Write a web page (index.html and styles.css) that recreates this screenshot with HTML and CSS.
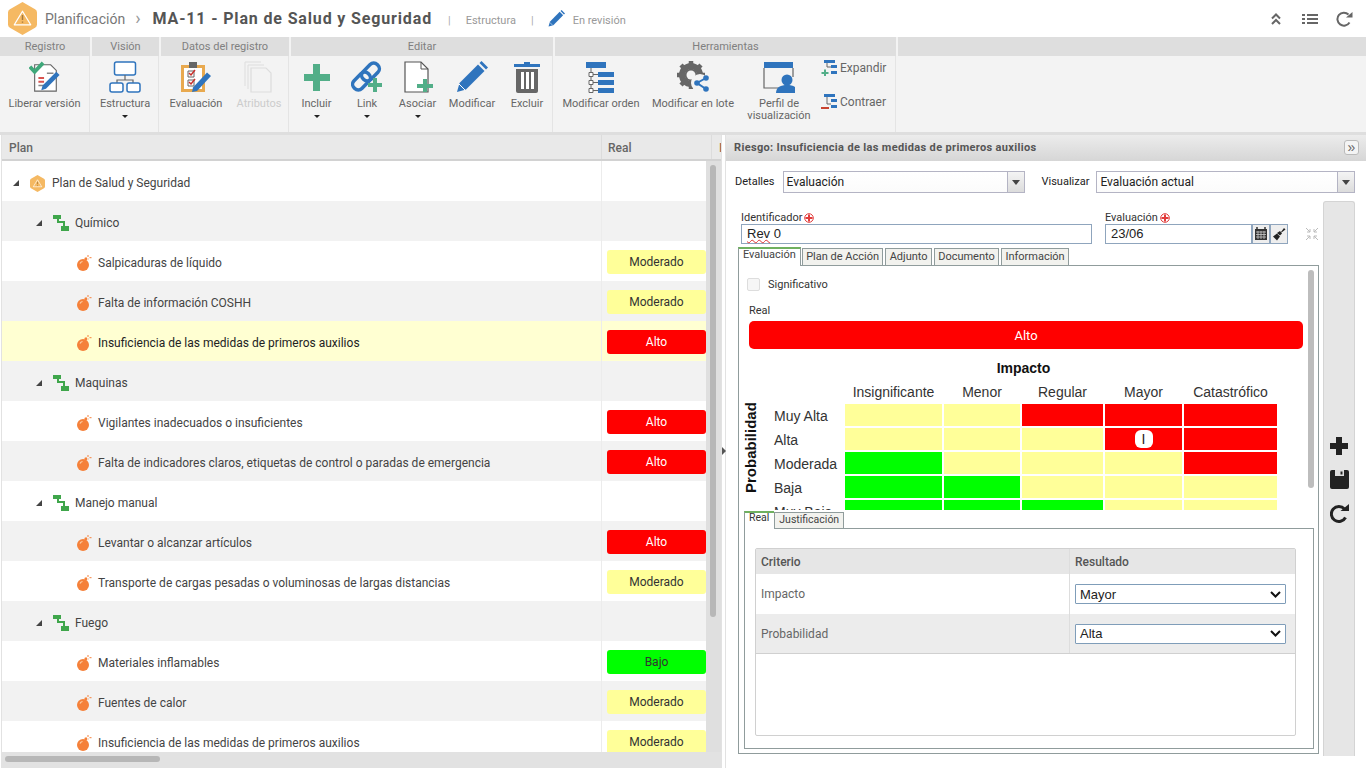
FILE: index.html
```html
<!DOCTYPE html>
<html lang="es">
<head>
    <meta charset="UTF-8">
    <title>MA-11 - Plan de Salud y Seguridad</title>
    <link rel="stylesheet" href="styles.css">
</head>
<body>
    <svg class="defs" width="0" height="0">
        <symbol id="bomb" viewBox="0 0 16 16">
            <circle cx="7" cy="10" r="6" fill="#f5813a"/>
            <path d="M4 8.5a3.5 3.5 0 0 1 2.5-2" stroke="#fcd0a8" stroke-width="1.2" fill="none"/>
            <rect x="8.5" y="2.8" width="2.5" height="2.5" fill="#f5813a"/>
            <path d="M12 0v2M12 3.5v1M13.5 2.7h2M9.5 2.7h1" stroke="#f5813a" stroke-width="1"/>
        </symbol>
        <symbol id="branch" viewBox="0 0 16 16">
            <path d="M0 0h8v4H6v2h6v5h4v5H8v-5h2V8H4V4H0z" fill="#3fa64b"/>
        </symbol>
        <symbol id="hex" viewBox="0 0 30 34">
            <path d="M15 0l13 7.5a4 4 0 0 1 2 3.5v12a4 4 0 0 1-2 3.5L15 34 2 26.5a4 4 0 0 1-2-3.5V11a4 4 0 0 1 2-3.5z" fill="#f5b963"/>
            <path d="M15 9.5L23.5 23.5H6.5z" fill="none" stroke="#fff" stroke-width="1.3" stroke-linejoin="round"/>
            <path d="M15 13.5v5M15 20v1.5" stroke="#a5793c" stroke-width="1.5"/>
        </symbol>
        <symbol id="caret" viewBox="0 0 8 8">
            <path d="M7 1v6H1z" fill="#444"/>
        </symbol>
        <symbol id="mandatory" viewBox="0 0 10 10">
            <circle cx="5" cy="5" r="4.3" fill="none" stroke="#e23b3b"/>
            <path d="M5 1.5v7M1.5 5h7" stroke="#e23b3b" stroke-width="2"/>
        </symbol>
        <symbol id="pencil" viewBox="0 0 32 32">
            <path d="M1 31l2.5-9L22 3.5l6.5 6.5L10 28.5z" fill="#2f74bd"/>
            <path d="M23.5 2l2-2 6.5 6.5-2 2z" fill="#2f74bd"/>
            <path d="M3 23l6 6" stroke="#fff" stroke-width="1"/>
        </symbol>
    </svg>

    <header class="topbar">
        <svg class="logo"><use href="#hex"/></svg>
        <span class="crumb">Planificación</span>
        <span class="crumb-arrow">›</span>
        <h1 class="title">MA-11 - Plan de Salud y Seguridad</h1>
        <span class="pipe pipe-first">|</span>
        <span class="meta">Estructura</span>
        <span class="pipe pipe-last">|</span>
        <svg class="status-pen"><use href="#pencil"/></svg>
        <span class="meta">En revisión</span>
        <div class="top-actions">
            <svg class="chev" width="10" height="12" viewBox="0 0 10 12"><path d="M1 5.5l4-4 4 4M1 11l4-4 4 4" fill="none" stroke="#666" stroke-width="2"/></svg>
            <svg width="16" height="12" viewBox="0 0 16 12"><path d="M0 2h3M5 2h11M0 6h3M5 6h11M0 10h3M5 10h11" stroke="#666" stroke-width="2"/></svg>
            <svg width="18" height="16" viewBox="0 0 18 16"><path d="M14.5 11.5A6.5 6.5 0 1 1 13.5 3.5" fill="none" stroke="#666" stroke-width="2"/><path d="M11 6.5h6.5V1z" fill="#666"/></svg>
        </div>
    </header>

    <nav class="ribbon">
        <section class="group g-reg">
            <h2>Registro</h2>
            <div class="tools">
                <div class="tool">
                    <svg class="ico" viewBox="0 0 34 32">
                        <path d="M6 3h17l6 6v22H6z" fill="#fff" stroke="#666" stroke-width="1.2"/>
                        <path d="M10 17h6M10 21h6" stroke="#d9534f" stroke-width="2"/>
                        <path d="M10 25h7M19 12h7" stroke="#888" stroke-width="1.5"/>
                        <path d="M13 30l1.5-5L29 10.5l3.5 3.5L18 28.5z" fill="#2f74bd"/>
                        <path d="M1 5l5 5.5L15 1" fill="none" stroke="#3fa87a" stroke-width="4"/>
                    </svg>
                    <span>Liberar versión</span>
                </div>
            </div>
        </section>
        <section class="group g-vis">
            <h2>Visión</h2>
            <div class="tools">
                <div class="tool">
                    <svg class="ico" viewBox="0 0 32 32">
                        <rect x="5.5" y="1" width="21" height="13" rx="2" fill="#fff" stroke="#2f74bd" stroke-width="1.5"/>
                        <path d="M16 14v5M8 23v-4h16v4" fill="none" stroke="#666" stroke-width="1.2"/>
                        <rect x="1" y="22" width="13" height="9" rx="2" fill="#fff" stroke="#2f74bd" stroke-width="1.5"/>
                        <rect x="18" y="22" width="13" height="9" rx="2" fill="#fff" stroke="#2f74bd" stroke-width="1.5"/>
                    </svg>
                    <span>Estructura</span>
                    <i class="drop"></i>
                </div>
            </div>
        </section>
        <section class="group g-data">
            <h2>Datos del registro</h2>
            <div class="tools">
                <div class="tool">
                    <svg class="ico" viewBox="0 0 32 32">
                        <rect x="1" y="4" width="24" height="27" fill="#e8a94f"/>
                        <rect x="4" y="7" width="18" height="21" fill="#fff"/>
                        <rect x="9" y="1" width="8" height="6" fill="#666"/>
                        <path d="M8 10h6v6H8zM8 19h6v6H8z" fill="#fff" stroke="#666"/>
                        <path d="M9 12l2 2 4-5M9 21l2 2 4-5" fill="none" stroke="#c9302c" stroke-width="1.5"/>
                        <path d="M12 31l1-4.5L27 11.5l4 3.5L17 30z" fill="#2f74bd"/>
                    </svg>
                    <span>Evaluación</span>
                </div>
                <div class="tool disabled">
                    <svg class="ico" viewBox="0 0 32 32">
                        <path d="M2 1h16M2 1v24M5 4h16M5 4v24" fill="none" stroke="#ddd"/>
                        <path d="M8 7h15l5 5v19H8z" fill="none" stroke="#ddd" stroke-width="1.2"/>
                    </svg>
                    <span>Atributos</span>
                </div>
            </div>
        </section>
        <section class="group g-edit">
            <h2>Editar</h2>
            <div class="tools">
                <div class="tool">
                    <svg class="ico" viewBox="0 0 32 32"><path d="M12 3h7v10h10v7H19v10h-7V20H3v-7h9z" fill="#52ae88"/></svg>
                    <span>Incluir</span>
                    <i class="drop"></i>
                </div>
                <div class="tool">
                    <svg class="ico" viewBox="0 0 32 32">
                        <rect x="14" y="1" width="11" height="20" rx="5" transform="rotate(45 19.5 11)" fill="none" stroke="#2f74bd" stroke-width="3.5"/>
                        <rect x="5" y="10" width="11" height="20" rx="5" transform="rotate(45 10.5 20)" fill="none" stroke="#2f74bd" stroke-width="3.5"/>
                        <path d="M22 17h4v5h5v4h-5v5h-4v-5h-5v-4h5z" fill="#52ae88"/>
                    </svg>
                    <span>Link</span>
                    <i class="drop"></i>
                </div>
                <div class="tool">
                    <svg class="ico" viewBox="0 0 32 32">
                        <path d="M3 1h16l7 7v23H3z" fill="#fff" stroke="#555" stroke-width="1.2"/>
                        <path d="M19 1v7h7" fill="none" stroke="#555"/>
                        <path d="M21 18h4v5h6v4h-6v4h-4v-4h-6v-4h6z" fill="#52ae88"/>
                    </svg>
                    <span>Asociar</span>
                    <i class="drop"></i>
                </div>
                <div class="tool">
                    <svg class="ico"><use href="#pencil"/></svg>
                    <span>Modificar</span>
                </div>
                <div class="tool">
                    <svg class="ico" viewBox="0 0 32 32">
                        <path d="M3 3h26v3H3z" fill="#2f74bd"/>
                        <path d="M13 1h6v3h-6z" fill="#2f74bd"/>
                        <path d="M5 8h22v22a2 2 0 0 1-2 2H7a2 2 0 0 1-2-2z" fill="#666"/>
                        <path d="M10 11h3v17h-3zM15 11h3v17h-3zM20 11h3v17h-3z" fill="#fff"/>
                    </svg>
                    <span>Excluir</span>
                </div>
            </div>
        </section>
        <section class="group g-tool">
            <h2>Herramientas</h2>
            <div class="tools">
                <div class="tool">
                    <svg class="ico" viewBox="0 0 32 32">
                        <path d="M1 1h20v6H1zM13 11h16v5H13zM13 19h16v5H13zM13 27h16v5H13z" fill="#2f74bd"/>
                        <path d="M6 7v23M6 13.5h7M6 21.5h7M6 29.5h7" stroke="#666" fill="none"/>
                        <path d="M4 11.5h4v4H4zM4 19.5h4v4H4zM4 27.5h4v4H4z" fill="#fff" stroke="#666"/>
                    </svg>
                    <span>Modificar orden</span>
                </div>
                <div class="tool">
                    <svg class="ico" viewBox="0 0 32 32">
                        <circle cx="14" cy="14" r="9" fill="none" stroke="#666" stroke-width="6"/>
                        <path d="M14 0v28M0 14h28M4 4l20 20M24 4L4 24" stroke="#666" stroke-width="4.5"/>
                        <circle cx="14" cy="14" r="4.5" fill="#f3f3f3"/>
                        <circle cx="23" cy="22" r="9" fill="#f3f3f3"/>
                        <path d="M29 17l-9 5 9 6" fill="none" stroke="#2f74bd" stroke-width="2"/>
                        <circle cx="29" cy="17" r="2.8" fill="#2f74bd"/>
                        <circle cx="20" cy="22" r="2.8" fill="#2f74bd"/>
                        <circle cx="29" cy="28" r="2.8" fill="#2f74bd"/>
                    </svg>
                    <span>Modificar en lote</span>
                </div>
                <div class="tool">
                    <svg class="ico" viewBox="0 0 32 32">
                        <path d="M1 1h29v6H1z" fill="#2f74bd"/>
                        <path d="M1 7v20h15M30 7v9" fill="none" stroke="#666" stroke-width="1.2"/>
                        <circle cx="24" cy="19" r="5.5" fill="#2f74bd"/>
                        <path d="M13 32c0-6 5-8 11-8s11 2 11 8z" fill="#2f74bd"/>
                    </svg>
                    <span>Perfil de visualización</span>
                </div>
                <div class="side-tools">
                    <div class="side-tool">
                        <svg width="16" height="16" viewBox="0 0 16 16">
                            <path d="M3 0h11v3H3zM10 5h6v3h-6zM10 11h6v3h-6z" fill="#2f74bd"/>
                            <path d="M6 3v4h4" fill="none" stroke="#666"/>
                            <path d="M3 9.5h2V12h2.500v2H5v2H3v-2H.5v-2H3z" fill="#52ae88"/>
                        </svg>
                        <span>Expandir</span>
                    </div>
                    <div class="side-tool">
                        <svg width="16" height="16" viewBox="0 0 16 16">
                            <path d="M3 0h11v3H3zM10 5h6v3h-6zM10 11h6v3h-6z" fill="#2f74bd"/>
                            <path d="M6 3v7h4" fill="none" stroke="#666"/>
                            <path d="M0 13h8v2H0z" fill="#c9432f"/>
                        </svg>
                        <span>Contraer</span>
                    </div>
                </div>
            </div>
        </section>
        <section class="group g-rest">
            <h2>&nbsp;</h2>
            <div class="tools"></div>
        </section>
    </nav>

    <main class="workspace">
        <section class="plan">
            <div class="plan-head">
                <div class="col-plan">Plan</div>
                <div class="col-real">Real</div>
                <div class="col-more">I</div>
            </div>
            <div class="plan-scroll">
                <div class="rows">
                    <div class="row lvl-0">
                        <div class="cell-name"><svg class="caret"><use href="#caret"/></svg><svg class="node-hex"><use href="#hex"/></svg><span>Plan de Salud y Seguridad</span></div>
                        <div class="cell-real"></div>
                    </div>
                    <div class="row alt lvl-1">
                        <div class="cell-name"><svg class="caret"><use href="#caret"/></svg><svg class="node"><use href="#branch"/></svg><span>Químico</span></div>
                        <div class="cell-real"></div>
                    </div>
                    <div class="row lvl-2">
                        <div class="cell-name"><svg class="node"><use href="#bomb"/></svg><span>Salpicaduras de líquido</span></div>
                        <div class="cell-real"><b class="badge mod">Moderado</b></div>
                    </div>
                    <div class="row alt lvl-2">
                        <div class="cell-name"><svg class="node"><use href="#bomb"/></svg><span>Falta de información COSHH</span></div>
                        <div class="cell-real"><b class="badge mod">Moderado</b></div>
                    </div>
                    <div class="row selected lvl-2">
                        <div class="cell-name"><svg class="node"><use href="#bomb"/></svg><span>Insuficiencia de las medidas de primeros auxilios</span></div>
                        <div class="cell-real"><b class="badge high">Alto</b></div>
                    </div>
                    <div class="row alt lvl-1">
                        <div class="cell-name"><svg class="caret"><use href="#caret"/></svg><svg class="node"><use href="#branch"/></svg><span>Maquinas</span></div>
                        <div class="cell-real"></div>
                    </div>
                    <div class="row lvl-2">
                        <div class="cell-name"><svg class="node"><use href="#bomb"/></svg><span>Vigilantes inadecuados o insuficientes</span></div>
                        <div class="cell-real"><b class="badge high">Alto</b></div>
                    </div>
                    <div class="row alt lvl-2">
                        <div class="cell-name"><svg class="node"><use href="#bomb"/></svg><span>Falta de indicadores claros, etiquetas de control o paradas de emergencia</span></div>
                        <div class="cell-real"><b class="badge high">Alto</b></div>
                    </div>
                    <div class="row lvl-1">
                        <div class="cell-name"><svg class="caret"><use href="#caret"/></svg><svg class="node"><use href="#branch"/></svg><span>Manejo manual</span></div>
                        <div class="cell-real"></div>
                    </div>
                    <div class="row alt lvl-2">
                        <div class="cell-name"><svg class="node"><use href="#bomb"/></svg><span>Levantar o alcanzar artículos</span></div>
                        <div class="cell-real"><b class="badge high">Alto</b></div>
                    </div>
                    <div class="row lvl-2">
                        <div class="cell-name"><svg class="node"><use href="#bomb"/></svg><span>Transporte de cargas pesadas o voluminosas de largas distancias</span></div>
                        <div class="cell-real"><b class="badge mod">Moderado</b></div>
                    </div>
                    <div class="row alt lvl-1">
                        <div class="cell-name"><svg class="caret"><use href="#caret"/></svg><svg class="node"><use href="#branch"/></svg><span>Fuego</span></div>
                        <div class="cell-real"></div>
                    </div>
                    <div class="row lvl-2">
                        <div class="cell-name"><svg class="node"><use href="#bomb"/></svg><span>Materiales inflamables</span></div>
                        <div class="cell-real"><b class="badge low">Bajo</b></div>
                    </div>
                    <div class="row alt lvl-2">
                        <div class="cell-name"><svg class="node"><use href="#bomb"/></svg><span>Fuentes de calor</span></div>
                        <div class="cell-real"><b class="badge mod">Moderado</b></div>
                    </div>
                    <div class="row lvl-2">
                        <div class="cell-name"><svg class="node"><use href="#bomb"/></svg><span>Insuficiencia de las medidas de primeros auxilios</span></div>
                        <div class="cell-real"><b class="badge mod">Moderado</b></div>
                    </div>
                </div>
                <div class="vscroll"><div class="vthumb"></div></div>
            </div>
            <div class="hscroll"><div class="hthumb"></div></div>
        </section>

        <div class="splitter"><i></i></div>

        <section class="detail">
            <div class="detail-head">
                <span>Riesgo: Insuficiencia de las medidas de primeros auxilios</span>
                <button class="collapse">»</button>
            </div>
            <div class="filters">
                <label class="filter-label">Detalles</label>
                <div class="combo combo-a">Evaluación<i class="combo-btn"></i></div>
                <label class="filter-label filter-b">Visualizar</label>
                <div class="combo combo-b">Evaluación actual<i class="combo-btn"></i></div>
            </div>
            <div class="detail-body">
                <div class="form">
                    <div class="fields">
                        <div class="field field-id">
                            <label>Identificador <svg class="req"><use href="#mandatory"/></svg></label>
                            <div class="text-input"><u>Rev</u> 0</div>
                        </div>
                        <div class="field field-date">
                            <label>Evaluación <svg class="req"><use href="#mandatory"/></svg></label>
                            <div class="date-line">
                                <div class="text-input">23/06</div>
                                <button class="mini">
                                    <svg width="14" height="14" viewBox="0 0 14 14"><path d="M1 2h12v11H1z" fill="#333"/><path d="M3 0v3M11 0v3" stroke="#333" stroke-width="1.5"/><path d="M2 5h10M2 7.5h10M2 10h10M4 4v8M7 4v8M10 4v8" stroke="#ccc" stroke-width=".8"/></svg>
                                </button>
                                <button class="mini">
                                    <svg width="14" height="14" viewBox="0 0 14 14"><path d="M9 5l3-4 1.5 1.5-4 3zM8 4l2 2.5-2 2L5 6zM5 6.5l3 3-3 4-4-4z" fill="#222"/></svg>
                                </button>
                                <svg class="shrink" width="14" height="14" viewBox="0 0 14 14"><path d="M1 1l4 4M13 1L9 5M1 13l4-4M13 13L9 9M5 2v3H2M9 2v3h3M5 12V9H2M9 12V9h3" fill="none" stroke="#bbb"/></svg>
                            </div>
                        </div>
                    </div>

                    <div class="tabs">
                        <span class="tab active">Evaluación</span>
                        <span class="tab">Plan de Acción</span>
                        <span class="tab">Adjunto</span>
                        <span class="tab">Documento</span>
                        <span class="tab">Información</span>
                    </div>
                    <div class="tab-panel">
                        <div class="eval-scroll">
                            <div class="eval-bar"></div>
                            <div class="check-line"><i class="check"></i><span>Significativo</span></div>
                            <div class="real-label">Real</div>
                            <div class="real-bar">Alto</div>

                            <div class="matrix-title">Impacto</div>
                            <div class="matrix-wrap">
                                <div class="prob">Probabilidad</div>
                                <div class="matrix">
                                    <span></span>
                                    <span class="hd">Insignificante</span>
                                    <span class="hd">Menor</span>
                                    <span class="hd">Regular</span>
                                    <span class="hd">Mayor</span>
                                    <span class="hd">Catastrófico</span>

                                    <span class="rl">Muy Alta</span>
                                    <i class="y"></i><i class="y"></i><i class="r"></i><i class="r"></i><i class="r"></i>

                                    <span class="rl">Alta</span>
                                    <i class="y"></i><i class="y"></i><i class="y"></i><i class="r"><em class="pin">I</em></i><i class="r"></i>

                                    <span class="rl">Moderada</span>
                                    <i class="g"></i><i class="y"></i><i class="y"></i><i class="y"></i><i class="r"></i>

                                    <span class="rl">Baja</span>
                                    <i class="g"></i><i class="g"></i><i class="y"></i><i class="y"></i><i class="y"></i>

                                    <span class="rl">Muy Baja</span>
                                    <i class="g"></i><i class="g"></i><i class="g"></i><i class="y"></i><i class="y"></i>
                                </div>
                            </div>
                        </div>

                        <div class="subtabs">
                            <span class="subtab active">Real</span>
                            <span class="subtab">Justificación</span>
                        </div>
                        <div class="subpanel">
                            <div class="criteria">
                                <div class="crit-row crit-head"><div>Criterio</div><div>Resultado</div></div>
                                <div class="crit-row">
                                    <div>Impacto</div>
                                    <div><div class="select">Mayor<svg width="11" height="7" viewBox="0 0 11 7"><path d="M1 1l4.5 4.5L10 1" fill="none" stroke="#111" stroke-width="2"/></svg></div></div>
                                </div>
                                <div class="crit-row alt">
                                    <div>Probabilidad</div>
                                    <div><div class="select">Alta<svg width="11" height="7" viewBox="0 0 11 7"><path d="M1 1l4.5 4.5L10 1" fill="none" stroke="#111" stroke-width="2"/></svg></div></div>
                                </div>
                            </div>
                        </div>
                    </div>
                </div>
                <aside class="side-bar">
                    <svg width="18" height="18" viewBox="0 0 18 18"><path d="M6 0h6v6h6v6h-6v6H6v-6H0V6h6z" fill="#222"/></svg>
                    <svg width="19" height="19" viewBox="0 0 19 19"><path d="M2 0h15a2 2 0 0 1 2 2v15a2 2 0 0 1-2 2H2a2 2 0 0 1-2-2V2a2 2 0 0 1 2-2z" fill="#222"/><path d="M5 0h9v6H5z" fill="#ddd"/><path d="M10.5 1.5h2v3h-2z" fill="#222"/></svg>
                    <svg width="19" height="19" viewBox="0 0 19 19"><path d="M15.5 13.5A7.5 7.5 0 1 1 14.5 5" fill="none" stroke="#222" stroke-width="3"/><path d="M10.5 7H19V0z" fill="#222"/></svg>
                </aside>
            </div>
        </section>
    </main>
</body>
</html>
```

FILE: styles.css
```css
* {
    box-sizing: border-box;
}
html, body {
    height: 100%;
}
body {
    margin: 0;
    height: 768px;
    overflow: hidden;
    display: flex;
    flex-direction: column;
    font-family: Roboto, "Liberation Sans", sans-serif;
    font-size: 12px;
    color: #444;
    background: #fff;
}
.defs {
    position: absolute;
}

/* top bar */
.topbar {
    height: 37px;
    flex: none;
    display: flex;
    align-items: center;
    padding-left: 8px;
    background: #fff;
}
.logo {
    width: 29px;
    height: 33px;
    margin-right: 8px;
}
.crumb {
    font-size: 14px;
    color: #777;
}
.crumb-arrow {
    font-size: 18px;
    color: #999;
    margin: -3px 12px 0 10px;
}
.title {
    margin: 0;
    font-size: 16px;
    font-weight: 700;
    color: #555;
    letter-spacing: .85px;
}
.pipe {
    color: #aaa;
    font-size: 11px;
    margin: 4px 15px 0;
}
.pipe-first {
    margin-left: 16px;
}
.pipe-last {
    margin-right: 12px;
}
.meta {
    font-size: 11px;
    color: #999;
    padding-top: 4px;
}
.status-pen {
    width: 17px;
    height: 17px;
    margin: 0 8px 0 2px;
}
.top-actions {
    margin-left: auto;
    display: flex;
    align-items: center;
    gap: 17px;
    padding-right: 13px;
}
.chev {
    margin-right: 4px;
}

/* ribbon */
.ribbon {
    height: 98px;
    flex: none;
    display: grid;
    grid-template-columns: 92px 69px 130px 264px 343px 1fr;
    background: #f3f3f3;
    border-bottom: 3px solid #dedede;
}
.group {
    display: flex;
    flex-direction: column;
    min-width: 0;
}
.group h2 {
    margin: 0 2px 0 0;
    height: 19px;
    line-height: 19px;
    background: #dedede;
    text-align: center;
    font-size: 11px;
    font-weight: 400;
    color: #808080;
}
.g-rest h2 {
    margin-right: 0;
}
.tools {
    flex: 1;
    display: grid;
    grid-auto-flow: column;
    margin-right: 2px;
    border-right: 1px solid #e4e4e4;
}
.g-reg .tools { grid-template-columns: 89px; }
.g-vis .tools { grid-template-columns: 66px; }
.g-data .tools { grid-template-columns: 54px 72px; padding-left: 8px; }
.g-edit .tools { grid-template-columns: 51px 50px 51px 58px 52px; }
.g-tool .tools { grid-template-columns: 92px 92px 80px 1fr; }
.g-rest .tools { border: 0; }
.tool {
    display: flex;
    flex-direction: column;
    align-items: center;
    text-align: center;
    font-size: 11px;
    line-height: 12px;
    color: #666;
    padding-top: 5px;
}
.tool span {
    margin-top: 5px;
}
.ico {
    width: 32px;
    height: 32px;
    flex: none;
}
.tool.disabled {
    color: #ccc;
}
.drop {
    width: 0;
    height: 0;
    margin-top: 5px;
    border: 3px solid transparent;
    border-top: 3px solid #222;
    border-bottom: 0;
}
.side-tools {
    display: flex;
    flex-direction: column;
    gap: 18px;
    padding: 4px 0 0 2px;
}
.side-tool {
    display: flex;
    align-items: center;
    gap: 3px;
    font-size: 12px;
    color: #666;
}

/* workspace */
.workspace {
    flex: 1;
    min-height: 0;
    display: flex;
    background: #fff;
}
.plan {
    width: 720px;
    margin-left: 1px;
    display: flex;
    flex-direction: column;
    border-left: 1px solid #e2e2e2;
    overflow: hidden;
}
.plan-head {
    height: 26px;
    flex: none;
    display: flex;
    background: #e9e9e9;
    border-bottom: 2px solid #d2d2d2;
    font-size: 12px;
    font-weight: 500;
    color: #666;
    line-height: 26px;
}
.col-plan {
    width: 599px;
    padding-left: 7px;
}
.col-real {
    width: 110px;
    padding-left: 6px;
    border-left: 1px solid #dcdcdc;
}
.col-more {
    flex: 1;
    padding-left: 7px;
    overflow: hidden;
    color: #a06a50;
    border-left: 1px solid #dcdcdc;
}
.plan-scroll {
    flex: 1;
    min-height: 0;
    display: flex;
    overflow: hidden;
}
.rows {
    width: 704px;
    flex: none;
}
.row {
    height: 40px;
    display: flex;
    background: #fff;
}
.row.alt {
    background: #f2f2f2;
}
.row.selected {
    background: #ffffd2;
}
.cell-name {
    width: 599px;
    display: flex;
    align-items: center;
    padding-top: 4px;
    color: #444;
    white-space: nowrap;
}
.selected .cell-name {
    color: #222;
}
.lvl-0 .cell-name { padding-left: 10px; }
.lvl-1 .cell-name { padding-left: 33px; }
.lvl-2 .cell-name { padding-left: 74px; }
.caret {
    width: 8px;
    height: 8px;
    margin-right: 10px;
}
.node-hex {
    width: 15px;
    height: 17px;
    margin-right: 7px;
}
.node {
    width: 16px;
    height: 16px;
    margin-right: 6px;
}
.cell-real {
    flex: 1;
    display: flex;
    align-items: center;
    padding: 2px 0 0 5px;
    border-left: 1px solid #ececec;
}
.badge {
    width: 99px;
    height: 24px;
    line-height: 24px;
    text-align: center;
    border-radius: 3px;
    font-weight: 400;
}
.badge.mod { background: #ffff99; color: #333; }
.badge.high { background: #ff0000; color: #fff; }
.badge.low { background: #00ff00; color: #333; }
.vscroll {
    flex: 1;
    background: #dfdfdf;
    padding: 4px 0 0 4px;
}
.vthumb {
    width: 6px;
    height: 452px;
    border-radius: 3px;
    background: #b7b7b7;
}
.hscroll {
    height: 16px;
    flex: none;
    background: #e2e2e2;
    padding: 4px 3px;
}
.hthumb {
    width: 155px;
    height: 6px;
    border-radius: 3px;
    background: #b7b7b7;
}
.splitter {
    width: 5px;
    flex: none;
    display: flex;
    align-items: center;
    background: #fff;
    border-right: 1px solid #e2e2e2;
    border-left: 1px solid #e2e2e2;
}
.splitter i {
    width: 0;
    height: 0;
    margin-top: -2px;
    border: 4px solid transparent;
    border-left: 4px solid #555;
    border-right: 0;
}

/* risk detail */
.detail {
    flex: 1;
    min-width: 0;
    display: flex;
    flex-direction: column;
    background: #fff;
}
.detail-head {
    height: 26px;
    flex: none;
    display: flex;
    align-items: center;
    justify-content: space-between;
    padding: 0 7px 2px 8px;
    background: linear-gradient(#ececec, #d6d6d6);
    font-size: 11px;
    font-weight: 700;
    color: #555;
    letter-spacing: .34px;
}
.collapse {
    width: 15px;
    height: 15px;
    padding: 0;
    font-size: 14px;
    line-height: 10px;
    color: #666;
    background: #f4f4f4;
    border: 1px solid #bbb;
    border-radius: 3px;
}
.filters {
    height: 27px;
    flex: none;
    margin-top: 7px;
    display: flex;
    align-items: center;
    padding-left: 9px;
    font-size: 11px;
    color: #222;
}
.filter-b {
    margin-left: 17px;
}
.combo {
    position: relative;
    height: 22px;
    line-height: 20px;
    padding-left: 3px;
    border: 1px solid #b4b4c4;
    background: linear-gradient(#fff, #fbfbfb);
    font-size: 12px;
    color: #222;
}
.combo-a {
    width: 242px;
    margin-left: 8px;
}
.combo-b {
    width: 259px;
    margin-left: 7px;
}
.combo-btn {
    position: absolute;
    right: 0;
    top: 0;
    width: 17px;
    height: 20px;
    background: linear-gradient(#f4f4f4, #dcdcdc);
    border-left: 1px solid #b4b4c4;
}
.combo-btn::after {
    content: "";
    position: absolute;
    left: 4px;
    top: 8px;
    border: 4px solid transparent;
    border-top: 5px solid #444;
    border-bottom: 0;
}
.detail-body {
    flex: 1;
    min-height: 0;
    display: flex;
    align-items: flex-start;
    padding: 6px 0 0 12px;
}
.form {
    width: 581px;
    flex: none;
}
.fields {
    display: flex;
    padding: 8px 0 0 3px;
    height: 45px;
}
.field label {
    display: flex;
    align-items: center;
    gap: 2px;
    height: 15px;
    padding-top: 2px;
    font-size: 11px;
    color: #333;
}
.req {
    width: 10px;
    height: 10px;
}
.field-id {
    width: 364px;
}
.field-id .text-input {
    width: 351px;
}
.text-input {
    height: 20px;
    padding-left: 5px;
    border: 1px solid #8fa5bd;
    font: 13px/18px "Liberation Sans", sans-serif;
    color: #222;
}
.text-input u {
    text-decoration: underline wavy #d33 1px;
}
.date-line {
    display: flex;
    align-items: center;
}
.date-line .text-input {
    width: 147px;
}
.mini {
    width: 18px;
    height: 20px;
    padding: 0;
    display: flex;
    align-items: center;
    justify-content: center;
    background: #eee;
    border: 1px solid #8fa5bd;
}
.shrink {
    margin-left: 17px;
}
.tabs {
    display: flex;
    height: 19px;
    align-items: flex-end;
    gap: 2px;
}
.tab {
    height: 17px;
    line-height: 15px;
    padding: 0 3.3px;
    background: #f2f2ee;
    border: 1px solid #909c9c;
    border-bottom: 0;
    font-size: 11px;
    color: #444;
}
.tab.active {
    height: 19px;
    line-height: 11px;
    margin: 0 -1px -1px 0;
    padding: 0 4px;
    position: relative;
    background: #fff;
    border-top: 2px solid #6fb05f;
    z-index: 1;
}
.tab-panel {
    height: 489px;
    padding: 0 4px 4px 5px;
    border: 1px solid #909c9c;
}
.eval-scroll {
    position: relative;
    height: 244px;
    overflow: hidden;
    padding: 10px 6px 0 5px;
}
.eval-bar {
    position: absolute;
    right: 0;
    top: 4px;
    width: 6px;
    height: 218px;
    border-radius: 3px;
    background: #bdbdbd;
}
.check-line {
    display: flex;
    align-items: center;
    gap: 8px;
    height: 16px;
    margin-left: -2px;
    font-size: 11px;
    color: #333;
}
.check {
    width: 13px;
    height: 13px;
    border: 1px solid #ddd;
    border-radius: 2px;
    background: #f6f6f6;
}
.real-label {
    margin-top: 11px;
    height: 15px;
    line-height: 15px;
    font-size: 11px;
    color: #333;
}
.real-bar {
    margin-top: 3px;
    width: 554px;
    height: 28px;
    line-height: 29px;
    background: #ff0000;
    color: #fff;
    border-radius: 5px;
    text-align: center;
    font-size: 13px;
}
.matrix-title {
    margin-top: 10px;
    padding-left: 89px;
    text-align: center;
    width: 460px;
    font: 700 14px "Liberation Sans", sans-serif;
    color: #111;
    height: 18px;
    line-height: 18px;
}
.matrix-wrap {
    display: flex;
    margin-top: 6px;
}
.prob {
    writing-mode: vertical-rl;
    transform: rotate(180deg);
    align-self: flex-start;
    height: 90px;
    width: 16px;
    margin: 20px 0 0 -6px;
    text-align: center;
    font: 700 15px/16px "Liberation Sans", sans-serif;
    color: #111;
    white-space: nowrap;
}
.matrix {
    display: grid;
    grid-template-columns: 71px 97px 76px 81px 77px 93px;
    grid-template-rows: 19px repeat(5, 22px);
    gap: 2px;
    margin-left: 13px;
    font: 14px "Liberation Sans", sans-serif;
    color: #333;
}
.matrix .hd {
    text-align: center;
    line-height: 18px;
}
.matrix .rl {
    padding: 1px 0 0 2px;
    line-height: 22px;
}
.matrix i {
    display: flex;
    align-items: center;
    justify-content: center;
}
.matrix .y { background: #ffff99; }
.matrix .r { background: #ff0000; }
.matrix .g { background: #00ff00; }
.pin {
    width: 18px;
    height: 18px;
    border-radius: 6px;
    background: #fff;
    color: #222;
    font-style: normal;
    font-size: 14px;
    line-height: 18px;
    text-align: center;
}
.subtabs {
    display: flex;
    height: 18px;
    align-items: flex-end;
    position: relative;
}
.subtab {
    height: 16px;
    line-height: 14px;
    padding: 0 4px;
    background: #f2f2ee;
    border: 1px solid #909c9c;
    border-bottom: 0;
    font-size: 10.5px;
    color: #444;
}
.subtab.active {
    height: 18px;
    line-height: 10px;
    margin-bottom: -1px;
    padding-right: 5px;
    position: relative;
    z-index: 1;
    background: #fff;
    border: 0;
    border-top: 2px solid #6fb05f;
    border-left: 1px solid #909c9c;
    color: #333;
}
.subpanel {
    height: 221px;
    padding: 19px 17px 12px 10px;
    border: 1px solid #909c9c;
}
.criteria {
    height: 188px;
    border: 1px solid #d0d0d0;
    border-radius: 2px;
}
.crit-row {
    display: grid;
    grid-template-columns: 313px 1fr;
    height: 40px;
    align-items: center;
    background: #fff;
    font-size: 12px;
    color: #666;
}
.crit-row > div {
    padding-left: 5px;
    height: 100%;
    display: flex;
    align-items: center;
}
.crit-row > div + div {
    border-left: 1px solid #ddd;
}
.crit-row.alt {
    background: #ececec;
    border-bottom: 1px solid #d0d0d0;
}
.crit-head {
    height: 25px;
    background: #e6e6e6;
    font-weight: 500;
    color: #555;
}
.select {
    width: 211px;
    height: 20px;
    display: flex;
    align-items: center;
    justify-content: space-between;
    padding: 0 4px;
    background: #fff;
    border: 1px solid #7f9db9;
    border-radius: 1px;
    font: 13px "Liberation Sans", sans-serif;
    color: #222;
}
.side-bar {
    width: 32px;
    height: 555px;
    flex: none;
    margin: 0 0 0 4px;
    display: flex;
    flex-direction: column;
    align-items: center;
    justify-content: flex-start;
    gap: 15px;
    padding-top: 235px;
    background: #e6e6e6;
    border: 1px solid #d4d4d4;
    border-bottom: 0;
    border-radius: 3px 3px 0 0;
}
```
